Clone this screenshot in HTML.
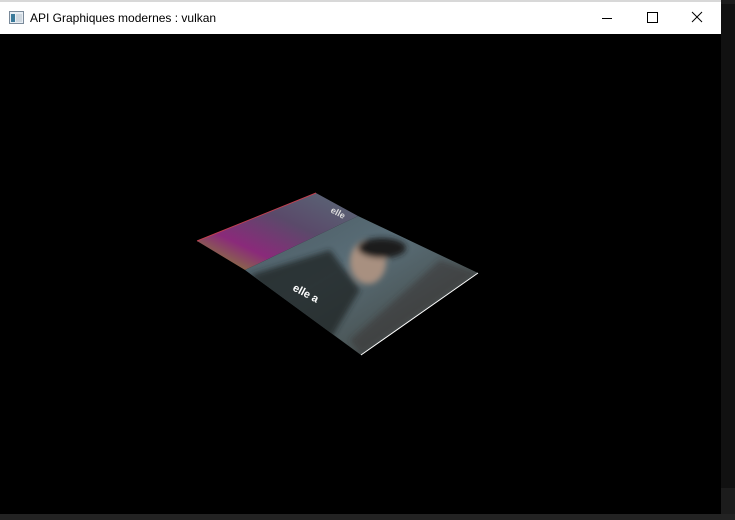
<!DOCTYPE html>
<html><head><meta charset="utf-8"><style>
html,body{margin:0;padding:0;width:735px;height:520px;overflow:hidden;background:#1c1c1c;}
#win{position:absolute;left:0;top:0;width:721px;height:514px;background:#000;}
#title{position:absolute;left:0;top:0;width:721px;height:34px;background:#fff;border-top:2px solid #d8d8d8;box-sizing:border-box;}
#title span{position:absolute;left:30px;top:9px;font:12px "Liberation Sans",sans-serif;color:#000;}
#rs{position:absolute;left:721px;top:4px;width:14px;height:484px;background:#111;}
#bs{position:absolute;left:0;top:514px;width:735px;height:6px;background:#232323;}
</style></head><body>
<div id="rs"></div><div id="bs"></div>
<div id="win">
<div id="title">
<svg style="position:absolute;left:9px;top:9px" width="15" height="14"><rect x="0.5" y="0.5" width="14" height="12" fill="#e8eef4" stroke="#7a8a9a"/><rect x="2" y="3" width="4" height="8" fill="#3a7a9a"/><rect x="7" y="3" width="6" height="8" fill="#cfd8e0"/></svg>
<span>API Graphiques modernes : vulkan</span>
<svg style="position:absolute;left:595px;top:0" width="120" height="32" fill="none" stroke="#000" stroke-width="1">
<line x1="7" y1="16.5" x2="17" y2="16.5"/>
<rect x="52.5" y="10.5" width="10" height="10"/>
<line x1="97" y1="10" x2="107" y2="20"/><line x1="107" y1="10" x2="97" y2="20"/>
</svg>
</div>
<svg style="position:absolute;left:0;top:0" width="721" height="514">
<defs>
<linearGradient id="g1" x1="0" y1="1" x2="1" y2="0">
<stop offset="0" stop-color="#8a9a20"/><stop offset="0.3" stop-color="#8a2a7a"/><stop offset="0.6" stop-color="#5a4a6a"/><stop offset="1" stop-color="#5a6a78"/>
</linearGradient>
<linearGradient id="g2" x1="0" y1="0" x2="1" y2="1">
<stop offset="0" stop-color="#4a5a62"/><stop offset="0.4" stop-color="#5a6e78"/><stop offset="0.7" stop-color="#4a5556"/><stop offset="1" stop-color="#3a4040"/>
</linearGradient>
<filter id="b"><feGaussianBlur stdDeviation="3"/></filter>
<clipPath id="c"><polygon points="245,270 358,216 478,273 361,355"/></clipPath>
</defs>
<polygon points="197,241 316,193 358,216 245,270" fill="url(#g1)"/>
<polygon points="245,270 358,216 478,273 361,355" fill="url(#g2)"/>
<g clip-path="url(#c)" filter="url(#b)">
<polygon points="250,275 330,250 360,290 330,340 290,330" fill="#1e2426" opacity="0.8"/>
<ellipse cx="368" cy="262" rx="18" ry="22" fill="#a89080"/>
<ellipse cx="382" cy="248" rx="24" ry="10" fill="#1a1a1a"/>
<polygon points="440,260 478,273 361,355 350,340" fill="#3a3430" opacity="0.5"/>
</g>
<line x1="197" y1="241" x2="316" y2="193" stroke="#c04050" stroke-width="1"/>
<line x1="361" y1="355" x2="478" y2="273" stroke="#fff" stroke-width="1"/>
<text x="292" y="290" fill="#fff" font-family="Liberation Sans" font-weight="bold" font-size="11" transform="rotate(28 292 290)">elle a</text>
<text x="330" y="212" fill="#ddd" font-family="Liberation Sans" font-weight="bold" font-size="9" transform="rotate(28 330 212)">elle</text>
</svg>
</div>
</body></html>
